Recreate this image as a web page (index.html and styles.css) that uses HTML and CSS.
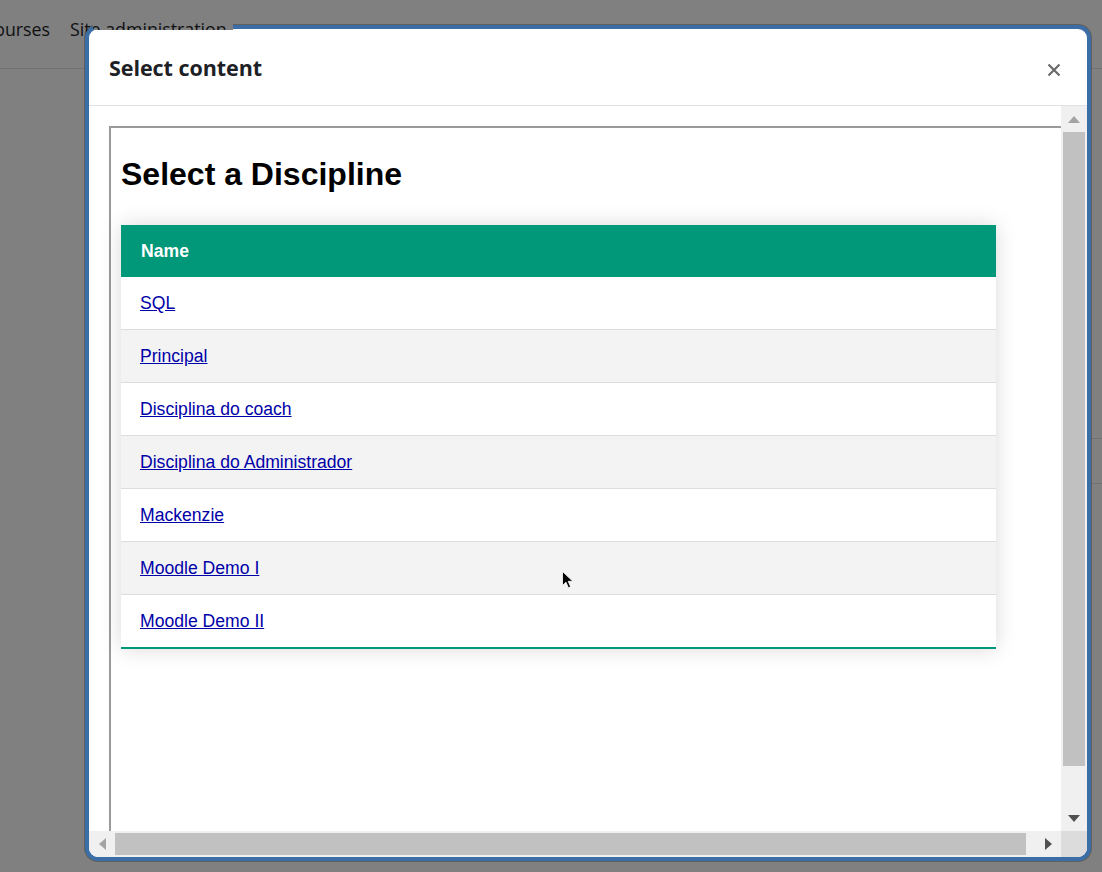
FILE: index.html
```html
<!DOCTYPE html>
<html lang="en">
<head>
<meta charset="utf-8">
<title>Select content</title>
<link rel="stylesheet" href="styles.css">
</head>
<body>
<div class="page">
  <nav class="topnav">
    <span class="nav-item">Courses</span>
    <span class="nav-item">Site administration</span>
  </nav>
  <div class="page-body">
    <div class="side-row"></div>
    <div class="side-row"></div>
  </div>
</div>

<div class="modal" role="dialog">
  <div class="modal-header">
    <h5 class="modal-title">Select content</h5>
    <button class="close" aria-label="Close">
      <svg width="14" height="14" viewBox="0 0 14 14"><path d="M1.5 1.5 L12.5 12.5 M12.5 1.5 L1.5 12.5" stroke="#6a6a6a" stroke-width="2.2" fill="none"/></svg>
    </button>
  </div>
  <div class="modal-body">
    <div class="viewport">
      <div class="frame">
        <h1 class="frame-title">Select a Discipline</h1>
        <table class="styled-table">
          <thead>
            <tr><th>Name</th></tr>
          </thead>
          <tbody>
            <tr><td><a href="#">SQL</a></td></tr>
            <tr><td><a href="#">Principal</a></td></tr>
            <tr><td><a href="#">Disciplina do coach</a></td></tr>
            <tr><td><a href="#">Disciplina do Administrador</a></td></tr>
            <tr><td><a href="#">Mackenzie</a></td></tr>
            <tr><td><a href="#">Moodle Demo I</a></td></tr>
            <tr><td><a href="#">Moodle Demo II</a></td></tr>
          </tbody>
        </table>
      </div>
    </div>
    <div class="vscroll">
      <div class="sb-btn"><svg width="12" height="7" viewBox="0 0 12 7"><path d="M6 0 L12 7 L0 7 Z" fill="#a3a3a3"/></svg></div>
      <div class="vtrack"><div class="vthumb"></div></div>
      <div class="sb-btn"><svg width="12" height="7" viewBox="0 0 12 7"><path d="M0 0 L12 0 L6 7 Z" fill="#505050"/></svg></div>
    </div>
    <div class="hscroll">
      <div class="sb-btn"><svg width="7" height="12" viewBox="0 0 7 12"><path d="M7 0 L7 12 L0 6 Z" fill="#a3a3a3"/></svg></div>
      <div class="htrack"><div class="hthumb"></div></div>
      <div class="sb-btn"><svg width="7" height="12" viewBox="0 0 7 12"><path d="M0 0 L7 6 L0 12 Z" fill="#505050"/></svg></div>
    </div>
    <div class="corner"></div>
  </div>
</div>

<div class="nav-ghost" aria-hidden="true"><span class="ghost-text">Site administration</span></div>

<svg class="cursor" width="12" height="18" viewBox="0 0 12 18"><path d="M0.5 0.5 V14.5 L4 11.2 L6.4 16.8 L8.6 15.8 L6.2 10.3 H10.8 Z" fill="#000" stroke="#fff" stroke-width="0.8"/></svg>
</body>
</html>
```

FILE: styles.css
```css
* { box-sizing: border-box; }

html, body {
  margin: 0;
  padding: 0;
}

body {
  width: 1102px;
  height: 872px;
  overflow: hidden;
  position: relative;
  background: #808080;
  font-family: "Open Sans", "Noto Sans", sans-serif;
}

/* dimmed background page */
.page {
  width: 100%;
}

.topnav {
  height: 69px;
  border-bottom: 1px solid #707274;
  display: flex;
  gap: 20px;
  margin-left: -17px;
  padding-top: 17px;
  font-size: 17.8px;
  line-height: 24px;
  color: #0f1113;
  white-space: nowrap;
}

.page-body {
  display: flex;
  flex-direction: column;
  align-items: flex-end;
  padding-top: 369px;
}

.side-row {
  width: 60px;
  height: 45px;
  border-top: 1px solid #707274;
}

/* page text that bleeds over the modal's top edge */
.nav-ghost {
  position: absolute;
  left: 93px;
  top: 20px;
  width: 140px;
  height: 10px;
  overflow: hidden;
  z-index: 3;
  background: #808080;
  white-space: nowrap;
  pointer-events: none;
}

.ghost-text {
  display: block;
  margin: -3px 0 0 -23px;
  font-size: 17.8px;
  line-height: 24px;
  color: #0f1113;
}

/* modal */
.modal {
  position: absolute;
  left: 85px;
  top: 25px;
  width: 1006px;
  height: 836px;
  border: 4px solid #3b6ea6;
  border-radius: 13px;
  background: #fff;
  box-shadow: 0 0 0 1px rgba(0, 0, 0, 0.25);
  overflow: hidden;
  display: flex;
  flex-direction: column;
  z-index: 2;
}

.modal-header {
  height: 77px;
  flex: none;
  border-bottom: 1px solid #dee2e6;
  display: flex;
  align-items: center;
  justify-content: space-between;
  padding: 0 26px 0 20px;
}

.modal-title {
  margin: 2px 0 0;
  font-family: "Open Sans", sans-serif;
  font-weight: 700;
  font-size: 21.5px;
  line-height: 28px;
  color: #1d2125;
  letter-spacing: -0.05px;
}

.close {
  border: 0;
  background: none;
  padding: 0;
  margin-top: 6px;
  width: 14px;
  height: 14px;
  display: flex;
}

.modal-body {
  flex: 1;
  min-height: 0;
  display: grid;
  grid-template-columns: 1fr 26px;
  grid-template-rows: 1fr 26px;
}

.viewport {
  overflow: hidden;
  padding: 20px 0 0 20px;
}

.frame {
  width: 990px;
  height: 820px;
  border-top: 2px solid #9a9a9a;
  border-left: 2px solid #9a9a9a;
  padding: 0 10px;
  font-family: "Liberation Sans", Arial, sans-serif;
  color: #000;
}

.frame-title {
  margin: 28px 0 32px;
  font-size: 32px;
  line-height: 37px;
  font-weight: 700;
}

.styled-table {
  border-collapse: collapse;
  width: 875px;
  font-size: 17.6px;
  line-height: 20px;
  box-shadow: 0 0 20px rgba(0, 0, 0, 0.15);
}

.styled-table thead tr {
  background-color: #009879;
  color: #fff;
  text-align: left;
}

.styled-table th,
.styled-table td {
  padding: 16px 19px;
  text-align: left;
}

.styled-table th {
  padding-left: 20px;
}

.styled-table tbody tr {
  border-bottom: 1px solid #dddddd;
}

.styled-table tbody tr:nth-of-type(even) {
  background-color: #f3f3f3;
}

.styled-table tbody tr:last-of-type {
  border-bottom: 2px solid #009879;
}

.styled-table a {
  color: #0000a8;
  text-decoration: underline;
}

/* fake scrollbars */
.vscroll {
  background: #f0f0f0;
  display: flex;
  flex-direction: column;
}

.hscroll {
  background: #f0f0f0;
  display: flex;
}

.sb-btn {
  flex: none;
  width: 26px;
  height: 26px;
  display: flex;
  align-items: center;
  justify-content: center;
}

.vtrack {
  flex: 1;
  padding: 0 2px;
}

.vthumb {
  height: 634px;
  background: #c1c1c1;
}

.htrack {
  flex: 1;
  padding: 2px 0;
}

.hthumb {
  width: 911px;
  height: 100%;
  background: #c1c1c1;
}

.corner {
  background: #dcdcdc;
}

.cursor {
  position: absolute;
  left: 562px;
  top: 571px;
  z-index: 4;
}
```
